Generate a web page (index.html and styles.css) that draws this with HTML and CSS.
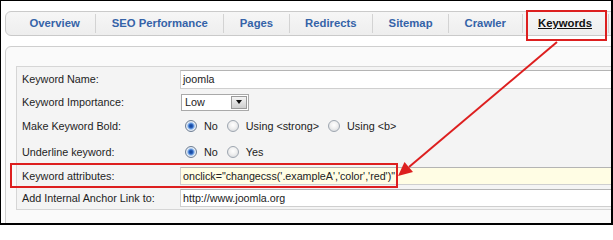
FILE: index.html
```
<!DOCTYPE html>
<html>
<head>
<meta charset="utf-8">
<link rel="stylesheet" href="styles.css">
</head>
<body>
<div class="frame">
  <div class="tabbar">
    <div class="tab">Overview</div>
    <div class="sep"></div>
    <div class="tab">SEO Performance</div>
    <div class="sep"></div>
    <div class="tab">Pages</div>
    <div class="sep"></div>
    <div class="tab">Redirects</div>
    <div class="sep"></div>
    <div class="tab">Sitemap</div>
    <div class="sep"></div>
    <div class="tab">Crawler</div>
    <div class="sep"></div>
    <div class="tab active">Keywords</div>
    <div class="sep"></div>
  </div>
  <div class="panel">
    <div class="form">
      <div class="row r1">
        <div class="label">Keyword Name:</div>
        <div class="field"><div class="input">joomla</div></div>
      </div>
      <div class="row r2">
        <div class="label">Keyword Importance:</div>
        <div class="field"><div class="select"><span class="sel-text">Low</span><span class="sel-btn"><span class="tri"></span></span></div></div>
      </div>
      <div class="row r3">
        <div class="label">Make Keyword Bold:</div>
        <div class="field radios">
          <span class="radio checked"></span><span class="rlabel">No</span>
          <span class="radio"></span><span class="rlabel">Using &lt;strong&gt;</span>
          <span class="radio"></span><span class="rlabel">Using &lt;b&gt;</span>
        </div>
      </div>
      <div class="row r4">
        <div class="label">Underline keyword:</div>
        <div class="field radios">
          <span class="radio checked"></span><span class="rlabel">No</span>
          <span class="radio"></span><span class="rlabel">Yes</span>
        </div>
      </div>
      <div class="row r5">
        <div class="label">Keyword attributes:</div>
        <div class="field"><div class="input yellow">onclick="changecss('.exampleA','color','red')"</div></div>
      </div>
      <div class="row r6">
        <div class="label">Add Internal Anchor Link to:</div>
        <div class="field"><div class="input">http://www.joomla.org</div></div>
      </div>
    </div>
  </div>
  <div class="mark mark-tab"></div>
  <div class="mark mark-row"></div>
  <svg class="arrow" width="613" height="225" viewBox="0 0 613 225">
    <line x1="557" y1="42" x2="409" y2="167" stroke="#dd1f1f" stroke-width="2"/>
    <polygon points="398,176 413,172 404.5,162" fill="#dd1f1f"/>
  </svg>
</div>
</body>
</html>
```
FILE: styles.css
```
* { box-sizing: border-box; }
html, body { margin: 0; padding: 0; background: #fff; }
body { font-family: "Liberation Sans", Arial, sans-serif; }

.frame {
  position: relative;
  width: 613px;
  height: 225px;
  overflow: hidden;
  background: #fff;
  border-top: 1px solid #000;
  border-left: 1px solid #000;
  border-right: 2px solid #000;
  border-bottom: 2px solid #000;
}

.tabbar {
  margin: 10px 0 0 4px;
  width: 680px;
  height: 25px;
  border: 1px solid #cacaca;
  border-radius: 6px;
  background: linear-gradient(#f6f6f6, #eeeeee);
  display: flex;
  align-items: center;
  padding-left: 8px;
}
.tab {
  padding: 0 15.5px;
  font-size: 11.3px;
  font-weight: bold;
  color: #3563a8;
  line-height: 23px;
  white-space: nowrap;
}
.tab.active { color: #111; text-decoration: underline; }
.sep { width: 1px; height: 19px; background: #d3d3d3; flex: none; }

.panel {
  margin: 10px 0 0 4px;
  width: 680px;
  height: 200px;
  border: 1px solid #cfcfcf;
  border-radius: 6px 0 0 0;
  background: #fafafa;
  padding: 19px 0 0 10px;
}

.form {
  width: 660px;
  border: 1px solid #d6d6d6;
  background: #f4f4f4;
}
.row {
  display: grid;
  grid-template-columns: 163px 1fr;
  align-items: center;
}
.r1 { height: 24px; }
.r2 { height: 22px; }
.r3 { height: 26px; }
.r4 { height: 25px; }
.r5 { height: 23px; }
.r6 { height: 22px; }

.label {
  padding-left: 5px;
  font-size: 10.8px;
  color: #1e1e1e;
  white-space: nowrap;
}
.field { display: flex; align-items: center; min-width: 0; }

.input {
  flex: none;
  width: 480px;
  height: 19px;
  border: 1px solid #cfcfcf;
  border-top-color: #b4b4b4;
  background: #fff;
  font-size: 10.7px;
  color: #222;
  line-height: 17px;
  padding-left: 2px;
  white-space: nowrap;
}
.r5 .input, .r6 .input { height: 18px; line-height: 16px; }
.input.yellow { background: #fffde4; }

.select {
  margin-left: 1px;
  width: 68px;
  height: 17px;
  border: 1px solid #a9a9a9;
  background: #fff;
  display: flex;
  align-items: center;
  justify-content: space-between;
}
.sel-text { font-size: 10.8px; color: #222; padding-left: 3px; }
.sel-btn {
  width: 16px;
  height: 13px;
  margin-right: 1px;
  border: 1px solid #9a9a9a;
  background: linear-gradient(#f4f4f4, #cfcfcf);
  display: flex;
  align-items: center;
  justify-content: center;
}
.tri {
  width: 0; height: 0;
  border-left: 3px solid transparent;
  border-right: 3px solid transparent;
  border-top: 4px solid #111;
}

.radios { padding-left: 5px; }
.radio {
  width: 12px;
  height: 12px;
  border-radius: 50%;
  border: 1px solid #9ea6b0;
  background: radial-gradient(circle at 50% 40%, #ffffff 0%, #f0f0f0 45%, #cfd3d8 100%);
  flex: none;
}
.radio.checked {
  background: radial-gradient(circle at 50% 50%, #0d3f91 0%, #2c63c0 28%, #7aaae6 42%, #e7eef7 60%, #c4c9cf 100%);
  border-color: #6f7f94;
}
.rlabel {
  font-size: 10.8px;
  color: #222;
  margin-left: 7px;
  margin-right: 9px;
  white-space: nowrap;
}

.mark {
  position: absolute;
  border: 2px solid #dd1f1f;
}
.mark-tab { left: 525px; top: 9px; width: 81px; height: 31px; }
.mark-row { left: 9px; top: 162px; width: 388px; height: 25px; }

.arrow { position: absolute; left: -1px; top: -1px; }
```
